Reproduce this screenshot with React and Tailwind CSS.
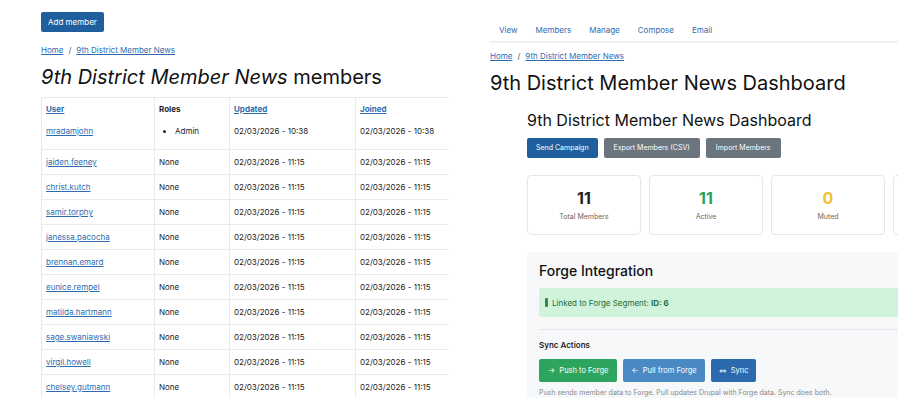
import React from 'react';

const members = [
    'jaiden.feeney',
    'christ.kutch',
    'samir.torphy',
    'janessa.pacocha',
    'brennan.emard',
    'eunice.rempel',
    'matilda.hartmann',
    'sage.swaniawski',
    'virgil.howell',
    'chelsey.gutmann',
];

const font = { fontFamily: 'Inter, "Noto Sans", sans-serif' };

const Breadcrumb = () => (
    <div className="flex items-center gap-[5px] text-[8px] leading-[10px] text-[#2e6cb0]">
        <a className="underline">Home</a>
        <span className="text-[#555]">/</span>
        <a className="underline">9th District Member News</a>
    </div>
);

const MembersPanel = () => (
    <div className="w-[449px] shrink-0 overflow-hidden pl-[41px] pt-[12px]">
        <button className="block h-[20px] rounded-[2px] bg-[#1f5f9e] px-[7px] text-[8px] text-white">Add member</button>
        <div className="mt-[13px]">
            <Breadcrumb />
        </div>
        <h1 className="mt-[9px] text-[20px] leading-[26px] text-[#111] whitespace-nowrap">
            <em>9th District Member News</em> members
        </h1>
        <table className="mt-[7px] w-[470px] border-collapse text-[8px] leading-[12px] text-[#222]">
            <thead>
                <tr className="h-[22px] border-t border-[#e8eaed]">
                    <th className="w-[113px] border-l border-[#e8eaed] pl-[4px] text-left font-bold text-[#2e6cb0] underline">User</th>
                    <th className="w-[75px] border-l border-[#e8eaed] pl-[4px] text-left font-bold">Roles</th>
                    <th className="w-[126px] border-l border-[#e8eaed] pl-[4px] text-left font-bold text-[#2e6cb0] underline">Updated</th>
                    <th className="border-l border-[#e8eaed] pl-[4px] text-left font-bold text-[#2e6cb0] underline">Joined</th>
                </tr>
            </thead>
            <tbody>
                <tr className="h-[30px] border-b border-[#e8eaed] align-top">
                    <td className="border-l border-[#e8eaed] pl-[4px] pt-[5px]"><a className="text-[#2e6cb0] underline">mradamjohn</a></td>
                    <td className="border-l border-[#e8eaed] pl-[4px] pt-[5px]">
                        <ul className="list-disc pl-[16px]">
                            <li>Admin</li>
                        </ul>
                    </td>
                    <td className="border-l border-[#e8eaed] pl-[4px] pt-[5px]">02/03/2026 - 10:38</td>
                    <td className="border-l border-[#e8eaed] pl-[4px] pt-[5px]">02/03/2026 - 10:38</td>
                </tr>
                {members.map((name) => (
                    <tr key={name} className="h-[25px] border-b border-[#e8eaed]">
                        <td className="border-l border-[#e8eaed] pl-[4px]"><a className="text-[#2e6cb0] underline">{name}</a></td>
                        <td className="border-l border-[#e8eaed] pl-[4px]">None</td>
                        <td className="border-l border-[#e8eaed] pl-[4px]">02/03/2026 - 11:15</td>
                        <td className="border-l border-[#e8eaed] pl-[4px]">02/03/2026 - 11:15</td>
                    </tr>
                ))}
            </tbody>
        </table>
    </div>
);

const StatCard = ({ value, label, color }) => (
    <div className="flex h-[60px] w-[114px] shrink-0 flex-col items-center justify-center rounded-[4px] border border-[#e4e6e9] bg-white">
        {value && <div className={`text-[16px] font-bold leading-[20px] ${color}`}>{value}</div>}
        {label && <div className="mt-[4px] text-[7px] leading-[10px] text-[#666]">{label}</div>}
    </div>
);

const DashboardPanel = () => (
    <div className="min-w-0 flex-1 overflow-hidden pl-[41px] pt-[20px]">
        <div className="flex border-b-2 border-[#eef0f2] text-[8px] leading-[12px] text-[#2e6cb0]">
            {['View', 'Members', 'Manage', 'Compose', 'Email'].map((t) => (
                <a key={t} className="px-[9px] pb-[5px] pt-[4px]">{t}</a>
            ))}
        </div>
        <div className="mt-[8px]">
            <Breadcrumb />
        </div>
        <h1 className="mt-[9px] text-[20px] leading-[26px] text-[#111] whitespace-nowrap">9th District Member News Dashboard</h1>
        <div className="ml-[37px] mt-[14px]">
            <h2 className="text-[16px] leading-[20px] text-[#111] whitespace-nowrap">9th District Member News Dashboard</h2>
            <div className="mt-[8px] flex gap-[6px] text-[7px] text-white">
                <button className="h-[20px] rounded-[2px] bg-[#1f5f9e] px-[9px]">Send Campaign</button>
                <button className="h-[20px] rounded-[2px] bg-[#6c757d] px-[10px]">Export Members (CSV)</button>
                <button className="h-[20px] rounded-[2px] bg-[#6c757d] px-[10px]">Import Members</button>
            </div>
            <div className="mt-[17px] flex gap-[8px]">
                <StatCard value="11" label="Total Members" color="text-[#222]" />
                <StatCard value="11" label="Active" color="text-[#27a25a]" />
                <StatCard value="0" label="Muted" color="text-[#f5c12b]" />
                <StatCard />
            </div>
            <div className="mt-[17px] rounded-[4px] bg-[#f7f8fa] pl-[12px] pt-[10px] pb-[8px]">
                <h3 className="text-[14px] font-medium leading-[18px] text-[#111]">Forge Integration</h3>
                <div className="mt-[8px] flex h-[29px] items-center gap-[4px] rounded-l-[3px] bg-[#d1f3dc] pl-[6px] text-[8px] text-[#1d6b3b]">
                    <span className="h-[9px] w-[3px] rounded-[1px] bg-[#2f8a52]"></span>
                    <span>Linked to Forge Segment: <b>ID: 6</b></span>
                </div>
                <div className="mt-[12px] h-px bg-[#e6e8eb]"></div>
                <div className="mt-[9px] text-[8px] font-semibold leading-[12px] text-[#222]">Sync Actions</div>
                <div className="mt-[8px] flex gap-[6px] text-[7.5px] text-white">
                    <button className="h-[23px] rounded-[2px] bg-[#2ea55f] px-[9px]">→&nbsp; Push to Forge</button>
                    <button className="h-[23px] rounded-[2px] bg-[#4a8ac4] px-[8px]">←&nbsp; Pull from Forge</button>
                    <button className="flex h-[23px] items-center gap-[4px] rounded-[2px] bg-[#2a6aad] px-[8px]">
                        <span className="text-[6px]">⇔</span>
                        <span>Sync</span>
                    </button>
                </div>
                <div className="mt-[6px] whitespace-nowrap text-[7px] leading-[10px] text-[#888]">Push sends member data to Forge. Pull updates Drupal with Forge data. Sync does both.</div>
            </div>
        </div>
    </div>
);

export default function App() {
    return (
        <div className="flex h-[398px] w-[898px] overflow-hidden bg-white" style={font}>
            <MembersPanel />
            <DashboardPanel />
        </div>
    );
}
